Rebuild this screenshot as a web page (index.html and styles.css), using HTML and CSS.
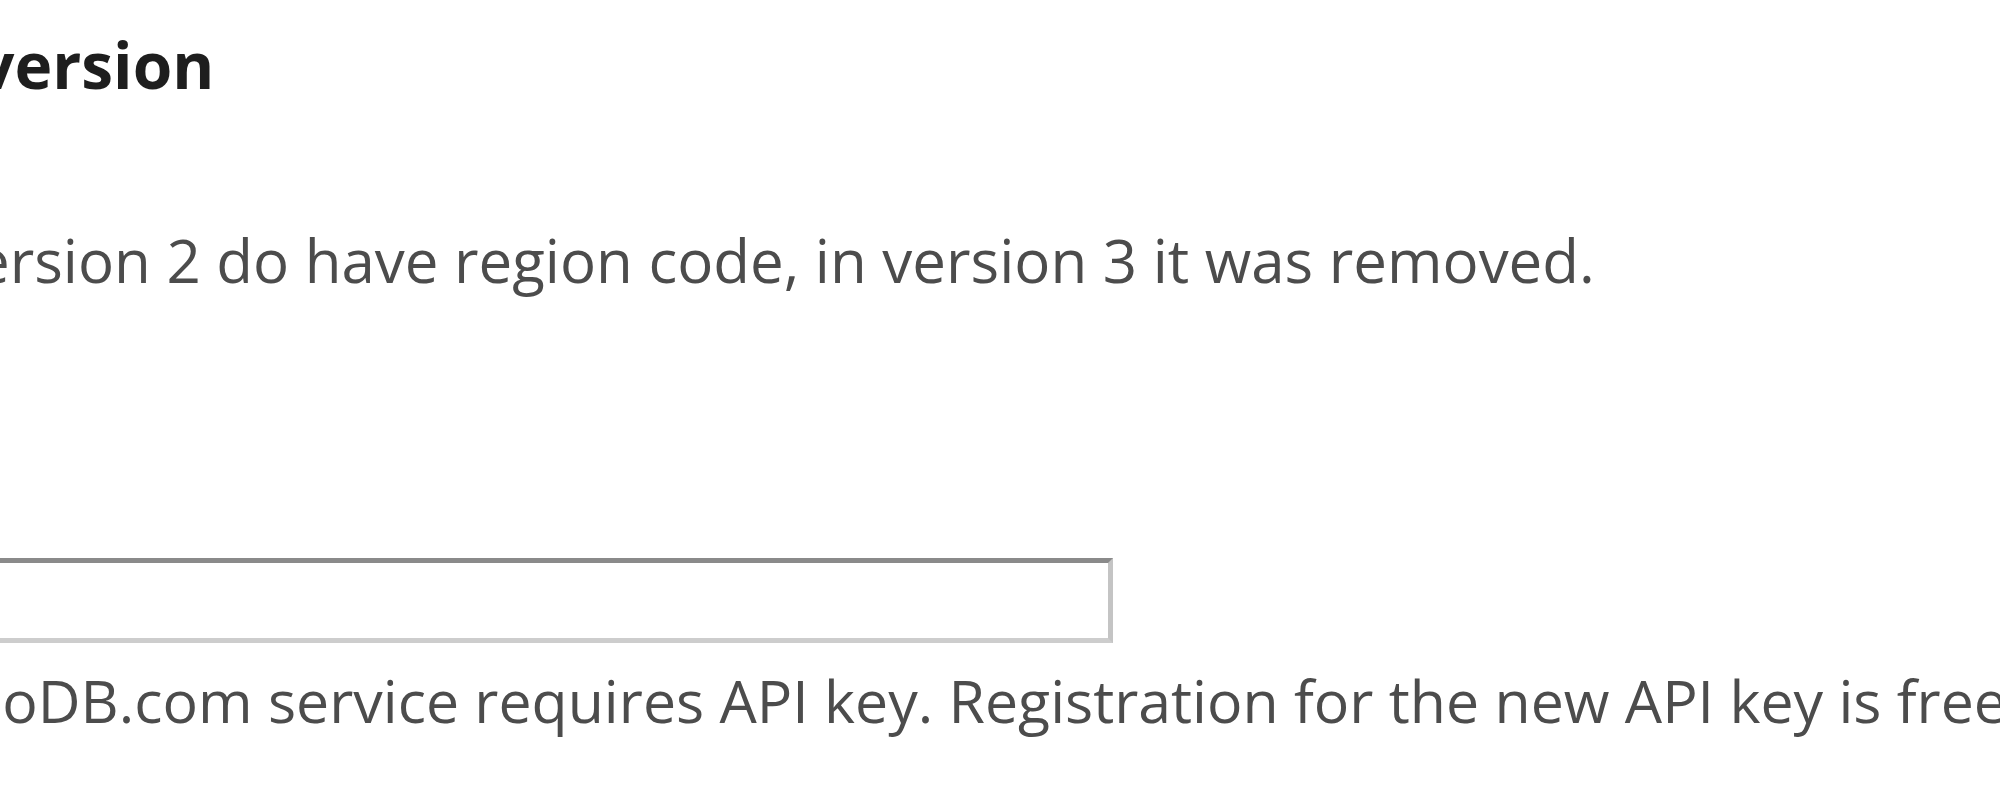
FILE: index.html
```html
<!DOCTYPE html>
<html lang="en">
<head>
<meta charset="utf-8">
<title>Settings</title>
<link rel="stylesheet" href="styles.css">
</head>
<body>
<div class="page">
  <h2 class="label">version</h2>
  <p class="desc line1">version 2 do have region code, in version 3 it was removed.</p>
  <input class="field" type="text">
  <p class="desc line2">TheAudioDB.com service requires API key. Registration for the new API key is free of charge.</p>
</div>
</body>
</html>
```

FILE: styles.css
```css
html, body {
  margin: 0;
  padding: 0;
  background: #ffffff;
  overflow: hidden;
}

.page {
  width: 2000px;
  height: 800px;
  padding-top: 27px;
  box-sizing: border-box;
  font-family: "Open Sans", "DejaVu Sans", sans-serif;
  overflow: hidden;
}

.label {
  margin: 0;
  font-size: 64px;
  line-height: 76px;
  font-weight: bold;
  color: #1e1e1e;
  text-indent: -22px;
  white-space: nowrap;
}

.desc {
  margin: 0;
  font-size: 59px;
  line-height: 70px;
  color: #4c4c4c;
  white-space: nowrap;
}

.line1 {
  margin-top: 122px;
  font-size: 60px;
  text-indent: -54px;
}

.field {
  display: block;
  margin: 263px 0 0 -40px;
  width: 1153px;
  height: 85px;
  box-sizing: border-box;
  border-style: solid;
  border-width: 5px;
  border-color: #8a8a8a #c4c4c4 #cdcdcd #c4c4c4;
  background: #ffffff;
  padding: 0;
}

.line2 {
  margin-top: 22px;
  text-indent: -224px;
}
```
